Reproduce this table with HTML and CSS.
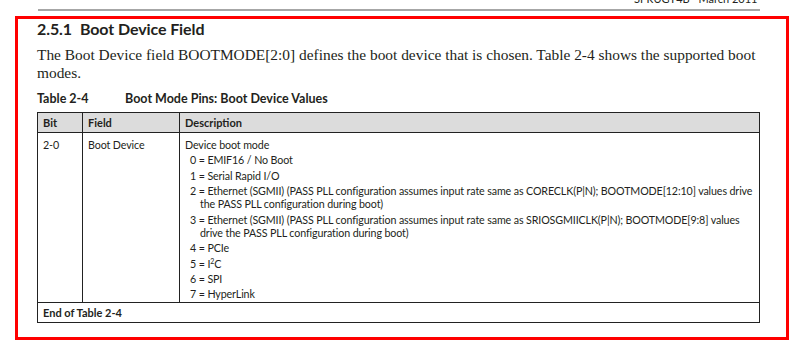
FILE: index.html
```
<!DOCTYPE html>
<html>
<head>
<meta charset="utf-8">
<link rel="stylesheet" href="styles.css">
</head>
<body>
<div class="runhead"><span class="runhead-text">SPRUGY4B—March 2011</span></div>
<div class="rule"></div>
<div class="frame">
  <h3 class="heading"><span class="num">2.5.1</span>Boot Device Field</h3>
  <p class="para">The Boot Device field BOOTMODE[2:0] defines the boot device that is chosen. Table 2-4 shows the supported boot modes.</p>
  <div class="caption"><span class="cap-num">Table 2-4</span><span class="cap-title">Boot Mode Pins: Boot Device Values</span></div>
  <table class="tbl">
    <colgroup><col class="c-bit"><col class="c-field"><col class="c-desc"></colgroup>
    <thead>
      <tr><th>Bit</th><th>Field</th><th>Description</th></tr>
    </thead>
    <tbody>
      <tr class="body-row">
        <td>2-0</td>
        <td>Boot Device</td>
        <td>
          <div class="dline">Device boot mode</div>
          <div class="item">0 = EMIF16 / No Boot</div>
          <div class="item">1 = Serial Rapid I/O</div>
          <div class="item">2 = Ethernet (SGMII) (PASS PLL configuration assumes input rate same as CORECLK(P|N); BOOTMODE[12:10] values drive the PASS PLL configuration during boot)</div>
          <div class="item">3 = Ethernet (SGMII) (PASS PLL configuration assumes input rate same as SRIOSGMIICLK(P|N); BOOTMODE[9:8] values drive the PASS PLL configuration during boot)</div>
          <div class="item">4 = PCIe</div>
          <div class="item">5 = I<sup class="sup">2</sup>C</div>
          <div class="item">6 = SPI</div>
          <div class="item">7 = HyperLink</div>
        </td>
      </tr>
      <tr class="end-row"><td colspan="3">End of Table 2-4</td></tr>
    </tbody>
  </table>
</div>
</body>
</html>
```
FILE: styles.css
```
html, body {
  margin: 0;
  padding: 0;
  background: #ffffff;
}
body {
  width: 801px;
  height: 354px;
  overflow: hidden;
  font-family: Lato, "Liberation Sans", sans-serif;
  color: #231f20;
}
.runhead {
  height: 5px;
  overflow: hidden;
  margin-left: 634px;
  width: 130px;
}
.runhead-text {
  display: block;
  font-size: 11px;
  line-height: 11px;
  margin-top: -7px;
  white-space: nowrap;
}
.rule {
  height: 2px;
  background: #a6a6a6;
  margin: 4px 0 0 38px;
  width: 722px;
}
.frame {
  box-sizing: border-box;
  margin: 5px 0 0 15px;
  width: 774px;
  height: 324px;
  border: 3px solid #ff0000;
  padding: 0 0 0 19px;
}
.heading {
  margin: 0;
  font-size: 16px;
  line-height: 20px;
  font-weight: bold;
  letter-spacing: -0.1px;
}
.num {
  margin-right: 8px;
}
.para {
  margin: 7px 0 0 0;
  font-family: "Liberation Serif", serif;
  font-size: 15.4px;
  line-height: 18px;
  width: 730px;
}
.caption {
  margin-top: 10px;
  font-size: 12.5px;
  line-height: 14px;
  font-weight: bold;
  display: flex;
}
.cap-num {
  width: 88px;
}
.tbl {
  margin-top: 6px;
  border-collapse: collapse;
  table-layout: fixed;
  width: 723px;
  font-size: 10.7px;
  line-height: 13.5px;
  letter-spacing: -0.12px;
}
.c-bit { width: 45px; }
.c-field { width: 97px; }
.tbl th, .tbl td {
  border: 1px solid #222222;
  text-align: left;
  vertical-align: top;
  padding: 0 5px;
}
.tbl th {
  background: #dcdcdc;
  font-weight: bold;
  font-size: 11px;
  letter-spacing: 0;
  height: 20px;
  padding-top: 3px;
  padding-bottom: 0;
  box-sizing: border-box;
}
.body-row td {
  padding-top: 5px;
  padding-bottom: 1px;
}
.item {
  margin-top: 1.75px;
  padding-left: 15px;
  text-indent: -10px;
}
.sup {
  font-size: 7px;
  line-height: 0;
  vertical-align: 4px;
}
.end-row td {
  font-weight: bold;
  font-size: 11px;
  letter-spacing: 0;
  height: 20px;
  padding-top: 3px;
  box-sizing: border-box;
}
```
